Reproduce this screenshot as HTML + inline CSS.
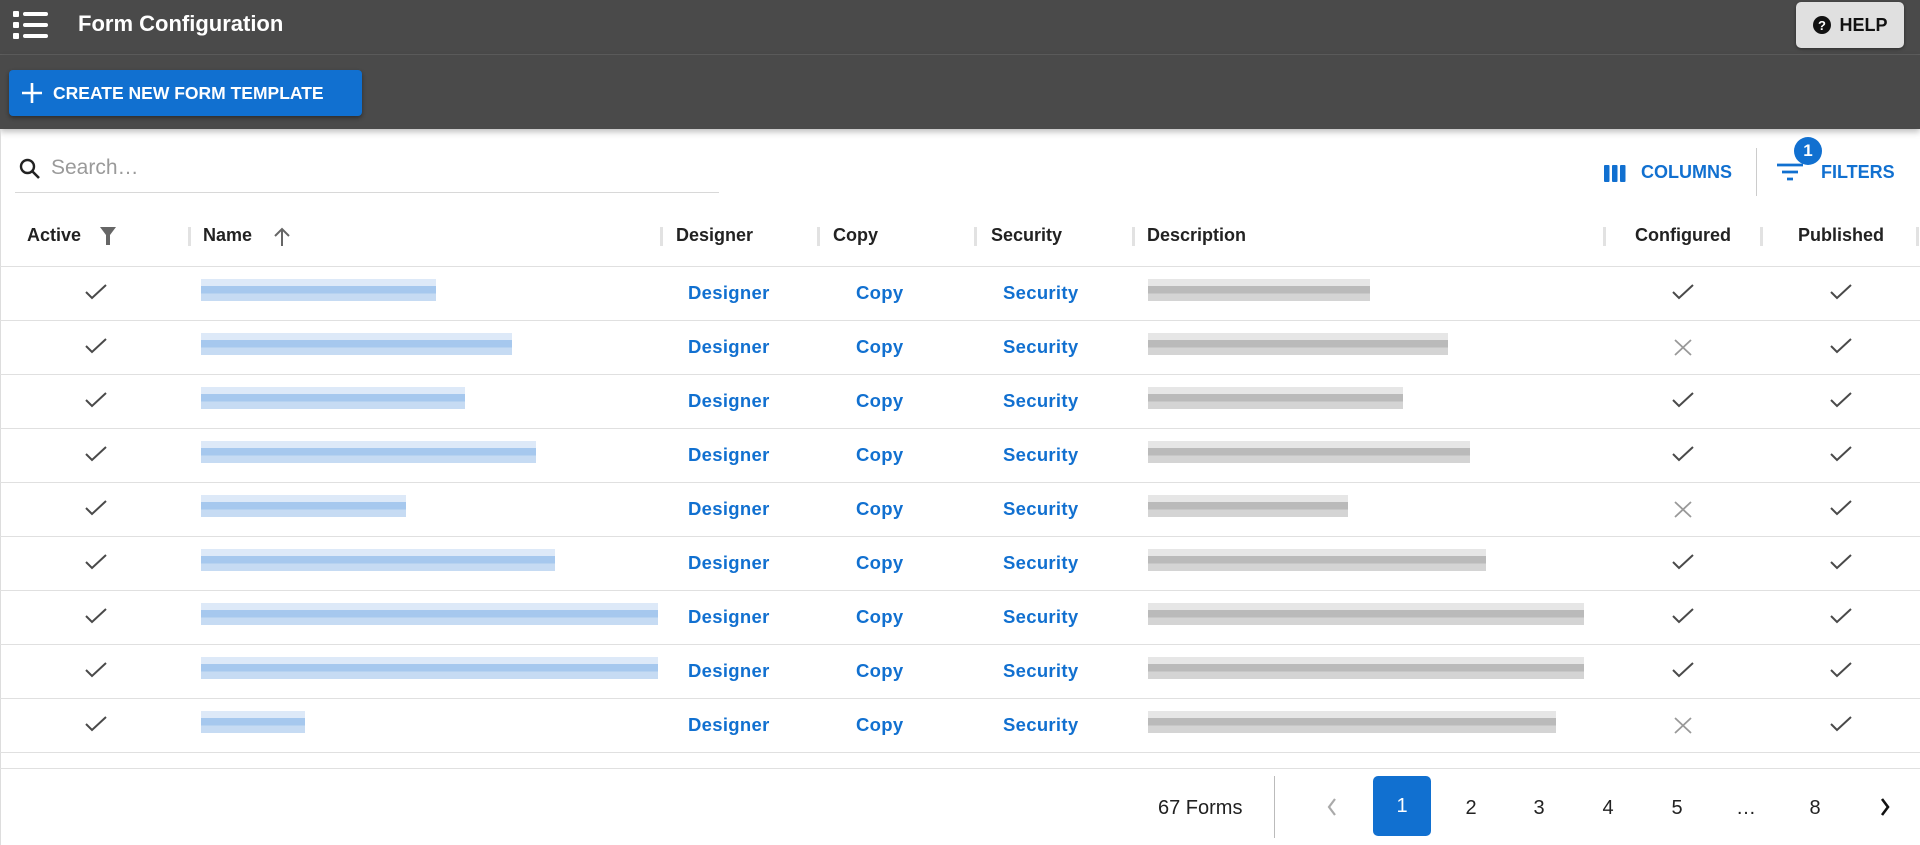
<!DOCTYPE html>
<html><head><meta charset="utf-8"><style>
*{margin:0;padding:0;box-sizing:border-box}
body{width:1920px;height:845px;overflow:hidden;background:#fff;font-family:"Liberation Sans",Arial,sans-serif;position:relative;color:#212121}
.a{position:absolute}
.top{left:0;top:0;width:1920px;height:55px;background:#4a4a4a;border-bottom:1px solid #5e5e5e}
.bar2{left:0;top:55px;width:1920px;height:74px;background:#4a4a4a;box-shadow:0 3px 6px rgba(0,0,0,.25)}
.title{left:78px;top:11px;color:#fff;font-size:22px;font-weight:bold}
.help{left:1796px;top:2px;width:108px;height:46px;background:#e0e0e0;border-radius:5px;box-shadow:0 1px 3px rgba(0,0,0,.4);font-size:18px;font-weight:bold;color:#111;display:flex;align-items:center;justify-content:center;gap:7px}
.create{left:9px;top:70px;width:353px;height:46px;background:#1170d0;border-radius:4px;box-shadow:0 2px 4px rgba(0,0,0,.4);color:#fff;font-size:17.5px;font-weight:bold;display:flex;align-items:center;padding-left:12px;gap:10px}
.search{left:51px;top:156px;font-size:21px;color:#9a9a9a}
.uline{left:15px;top:192px;width:704px;height:1px;background:#d8d8d8}
.blue{color:#1170d0}
.hd{top:225px;font-size:18px;font-weight:bold;color:#222}
.sep{top:227px;width:3px;height:19px;background:#e2e2e2}
.hl{left:0;width:1920px;height:1px;background:#e0e0e0}
.lk{font-size:18.5px;font-weight:bold;color:#1170d0;letter-spacing:.3px}
.bl{height:22px}
.nm{background:linear-gradient(#dde9f8 0 32%,#a6c8ee 32% 66%,#c6dbf3 66%)}
.ds{background:linear-gradient(#e6e6e6 0 32%,#bababa 32% 66%,#d4d4d4 66%)}
.pg{top:797px;font-size:20px;color:#222;width:40px;text-align:center}
</style></head><body>
<div class="a top"></div>
<div class="a bar2"></div>
<svg class="a" style="left:12px;top:10px" width="36" height="30" viewBox="0 0 36 30"><g fill="#fff"><rect x="1" y="1" width="6" height="6" rx="1"/><rect x="1" y="12" width="6" height="6" rx="1"/><rect x="1" y="23" width="6" height="6" rx="1"/><rect x="11" y="2" width="25" height="4" rx="2"/><rect x="11" y="13" width="25" height="4" rx="2"/><rect x="11" y="24" width="25" height="4" rx="2"/></g></svg>
<div class="a title">Form Configuration</div>
<div class="a help"><svg width="20" height="20" viewBox="0 0 20 20"><circle cx="10" cy="10" r="9" fill="#111"/><text x="10" y="15" text-anchor="middle" font-size="13" font-weight="bold" fill="#fff" font-family="Liberation Sans">?</text></svg>HELP</div>
<div class="a create"><svg width="22" height="22" viewBox="0 0 22 22"><path d="M11 1V21M1 11H21" stroke="#fff" stroke-width="2.6"/></svg>CREATE NEW FORM TEMPLATE</div>
<div class="a" style="left:0;top:129px;width:1px;height:716px;background:#ddd"></div>
<svg class="a" style="left:19px;top:158px" width="22" height="22" viewBox="0 0 22 22"><circle cx="8.5" cy="8.5" r="6.5" stroke="#222" stroke-width="2.4" fill="none"/><path d="M13.5 13.5L20 20" stroke="#222" stroke-width="2.6"/></svg>
<div class="a search">Search…</div>
<div class="a uline"></div>
<svg class="a" style="left:1604px;top:165px" width="22" height="17"><rect x="0" y="0" width="5.5" height="17" rx="1" fill="#1170d0"/><rect x="8" y="0" width="5.5" height="17" rx="1" fill="#1170d0"/><rect x="16" y="0" width="5.5" height="17" rx="1" fill="#1170d0"/></svg>
<div class="a blue" style="left:1641px;top:162px;font-size:18px;font-weight:bold">COLUMNS</div>
<div class="a" style="left:1756px;top:148px;width:1px;height:48px;background:#ccc"></div>
<svg class="a" style="left:1777px;top:163px" width="26" height="20"><path d="M0 2H26M5 9H21M10 16H16" stroke="#1170d0" stroke-width="2.8"/></svg>
<div class="a" style="left:1794px;top:137px;width:28px;height:28px;border-radius:50%;background:#1170d0;color:#fff;font-size:17px;font-weight:bold;text-align:center;line-height:28px">1</div>
<div class="a blue" style="left:1821px;top:162px;font-size:18px;font-weight:bold">FILTERS</div>

<div class="a hd" style="left:27px">Active</div>
<svg class="a" style="left:100px;top:227px" width="16" height="18"><path d="M0 0H16L10 8V18H6V8Z" fill="#666"/></svg>
<div class="a hd" style="left:203px">Name</div>
<svg class="a" style="left:274px;top:227px" width="16" height="19"><path d="M8 19V2M1 9L8 2L15 9" stroke="#666" stroke-width="2" fill="none"/></svg>
<div class="a hd" style="left:676px">Designer</div>
<div class="a hd" style="left:833px">Copy</div>
<div class="a hd" style="left:991px">Security</div>
<div class="a hd" style="left:1147px">Description</div>
<div class="a hd" style="left:1635px">Configured</div>
<div class="a hd" style="left:1798px">Published</div>
<div class="a sep" style="left:188px"></div><div class="a sep" style="left:660px"></div><div class="a sep" style="left:817px"></div><div class="a sep" style="left:974px"></div><div class="a sep" style="left:1132px"></div><div class="a sep" style="left:1603px"></div><div class="a sep" style="left:1760px"></div><div class="a sep" style="left:1916px"></div>
<div class="a hl" style="top:266px"></div>

<div id="rows"></div>
<div class="a hl" style="top:768px"></div>
<div class="a" style="left:1158px;top:797px;font-size:20px">67 Forms</div>
<div class="a" style="left:1274px;top:776px;width:1px;height:62px;background:#bbb"></div>
<svg class="a" style="left:1326px;top:797px" width="12" height="20"><path d="M9 2L3 10L9 18" stroke="#aaa" stroke-width="2.2" fill="none"/></svg>
<div class="a" style="left:1373px;top:776px;width:58px;height:60px;border-radius:5px;background:#1170d0;color:#fff;font-size:20px;text-align:center;line-height:60px">1</div>
<div class="a pg" style="left:1451px">2</div><div class="a pg" style="left:1519px">3</div><div class="a pg" style="left:1588px">4</div><div class="a pg" style="left:1657px">5</div><div class="a pg" style="left:1726px">…</div><div class="a pg" style="left:1795px">8</div>
<svg class="a" style="left:1879px;top:797px" width="12" height="20"><path d="M3 2L9 10L3 18" stroke="#111" stroke-width="2.6" fill="none"/></svg>
<script>
var nw=[235,311,264,335,205,354,457,457,104],dw=[222,300,255,322,200,338,436,436,408],cf=[1,0,1,1,0,1,1,1,0];
var h='';
for(var i=0;i<9;i++){var t=266+i*54,c=t+27;
var chk=function(x){return '<svg class="a" style="left:'+(x-11)+'px;top:'+(c-9)+'px" width="22" height="16"><path d="M1 8L7 14L21 1" stroke="#4a4a4a" stroke-width="2" fill="none"/></svg>'};
var xx=function(x){return '<svg class="a" style="left:'+(x-9)+'px;top:'+(c-8)+'px" width="18" height="17"><path d="M1 1L17 16M17 1L1 16" stroke="#999" stroke-width="1.8"/></svg>'};
h+=chk(96);
h+='<div class="a bl nm" style="left:201px;top:'+(c-14)+'px;width:'+nw[i]+'px"></div>';
h+='<div class="a lk" style="left:688px;top:'+(c-11)+'px">Designer</div>';
h+='<div class="a lk" style="left:856px;top:'+(c-11)+'px">Copy</div>';
h+='<div class="a lk" style="left:1003px;top:'+(c-11)+'px">Security</div>';
h+='<div class="a bl ds" style="left:1148px;top:'+(c-14)+'px;width:'+dw[i]+'px"></div>';
h+=cf[i]?chk(1683):xx(1683);
h+=chk(1841);
h+='<div class="a hl" style="top:'+(t+54)+'px"></div>';}
document.getElementById('rows').innerHTML=h;
</script>
</body></html>
